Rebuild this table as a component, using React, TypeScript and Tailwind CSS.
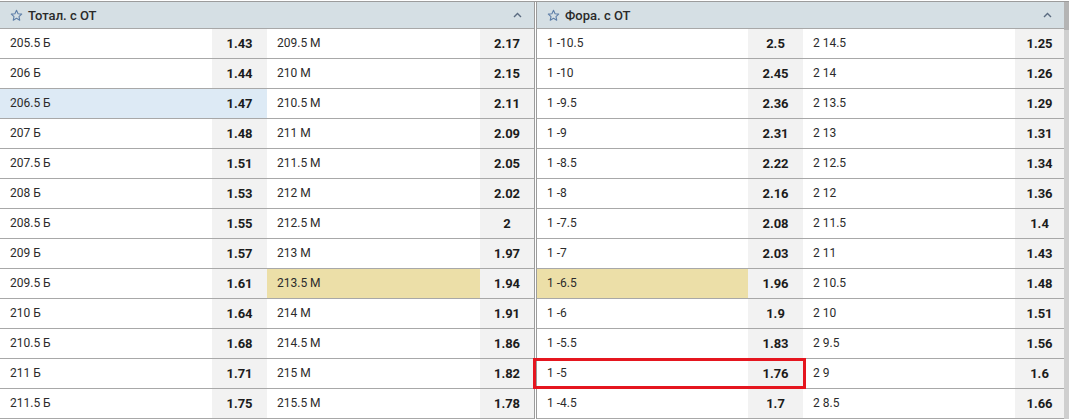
import React from "react";

type Row = { a: string; ao: string; b: string; bo: string };

const totals: Row[] = [
  { a: "205.5 Б", ao: "1.43", b: "209.5 М", bo: "2.17" },
  { a: "206 Б", ao: "1.44", b: "210 М", bo: "2.15" },
  { a: "206.5 Б", ao: "1.47", b: "210.5 М", bo: "2.11" },
  { a: "207 Б", ao: "1.48", b: "211 М", bo: "2.09" },
  { a: "207.5 Б", ao: "1.51", b: "211.5 М", bo: "2.05" },
  { a: "208 Б", ao: "1.53", b: "212 М", bo: "2.02" },
  { a: "208.5 Б", ao: "1.55", b: "212.5 М", bo: "2" },
  { a: "209 Б", ao: "1.57", b: "213 М", bo: "1.97" },
  { a: "209.5 Б", ao: "1.61", b: "213.5 М", bo: "1.94" },
  { a: "210 Б", ao: "1.64", b: "214 М", bo: "1.91" },
  { a: "210.5 Б", ao: "1.68", b: "214.5 М", bo: "1.86" },
  { a: "211 Б", ao: "1.71", b: "215 М", bo: "1.82" },
  { a: "211.5 Б", ao: "1.75", b: "215.5 М", bo: "1.78" },
];

const handicaps: Row[] = [
  { a: "1 -10.5", ao: "2.5", b: "2 14.5", bo: "1.25" },
  { a: "1 -10", ao: "2.45", b: "2 14", bo: "1.26" },
  { a: "1 -9.5", ao: "2.36", b: "2 13.5", bo: "1.29" },
  { a: "1 -9", ao: "2.31", b: "2 13", bo: "1.31" },
  { a: "1 -8.5", ao: "2.22", b: "2 12.5", bo: "1.34" },
  { a: "1 -8", ao: "2.16", b: "2 12", bo: "1.36" },
  { a: "1 -7.5", ao: "2.08", b: "2 11.5", bo: "1.4" },
  { a: "1 -7", ao: "2.03", b: "2 11", bo: "1.43" },
  { a: "1 -6.5", ao: "1.96", b: "2 10.5", bo: "1.48" },
  { a: "1 -6", ao: "1.9", b: "2 10", bo: "1.51" },
  { a: "1 -5.5", ao: "1.83", b: "2 9.5", bo: "1.56" },
  { a: "1 -5", ao: "1.76", b: "2 9", bo: "1.6" },
  { a: "1 -4.5", ao: "1.7", b: "2 8.5", bo: "1.66" },
];

const Star = () => (
  <svg width="13" height="13" viewBox="0 0 24 24" fill="none" stroke="#5f7fa8" strokeWidth="2" strokeLinejoin="round">
    <path d="M12 2.5l2.9 6.2 6.7.7-5 4.6 1.4 6.6L12 17.2l-6 3.4 1.4-6.6-5-4.6 6.7-.7z" />
  </svg>
);

const Chevron = () => (
  <svg width="9" height="6" viewBox="0 0 9 6" fill="none" stroke="#5a6b80" strokeWidth="1.4">
    <path d="M1 5l3.5-3.5L8 5" />
  </svg>
);

function Panel({
  title,
  rows,
  widths,
  blueRow,
  yellowRow,
  yellowCol,
  redRow,
}: {
  title: string;
  rows: Row[];
  widths: [string, string, string, string];
  blueRow?: number;
  yellowRow?: number;
  yellowCol?: "a" | "b";
  redRow?: number;
}) {
  return (
    <div className="flex flex-col">
      <div className="h-[27px] bg-[#d5dfe4] border-b border-[#a8a8a8] flex items-center pl-[10px] pr-[12px]">
        <Star />
        <span className="ml-[5px] text-[13px] font-medium text-[#2a2a2a] leading-none">{title}</span>
        <span className="ml-auto flex items-center">
          <Chevron />
        </span>
      </div>
      {rows.map((r, i) => {
        const blue = i === blueRow;
        const yA = i === yellowRow && yellowCol === "a";
        const yB = i === yellowRow && yellowCol === "b";
        return (
          <div key={i} className="relative flex h-[30px] border-b border-[#a8a8a8]">
            <div
              className={`${widths[0]} flex items-center pl-[10px] text-[12px] text-[#2b2b2b] ${
                blue ? "bg-[#ddeaf5]" : yA ? "bg-[#ecdfa8]" : "bg-white"
              }`}
            >
              <span className="-mt-[2px]">{r.a}</span>
            </div>
            <div
              className={`${widths[1]} flex items-center justify-center text-[13px] font-bold text-[#1c1c1c] ${
                blue ? "bg-[#ddeaf5]" : "bg-[#f2f2f2]"
              }`}
            >
              <span className="mt-[1px]">{r.ao}</span>
            </div>
            <div
              className={`${widths[2]} flex items-center pl-[10px] text-[12px] text-[#2b2b2b] ${
                yB ? "bg-[#ecdfa8]" : "bg-white"
              }`}
            >
              <span className="-mt-[2px]">{r.b}</span>
            </div>
            <div
              className={`${widths[3]} flex items-center justify-center text-[13px] font-bold text-[#1c1c1c] bg-[#f2f2f2]`}
            >
              <span className="mt-[1px]">{r.bo}</span>
            </div>
            {i === redRow && (
              <div className="absolute left-[-4px] top-[-1px] w-[273px] h-[31px] border-[3px] border-[#e5161f] pointer-events-none" />
            )}
          </div>
        );
      })}
    </div>
  );
}

export default function App() {
  return (
    <div
      className="w-[1069px] h-[420px] bg-white overflow-hidden pt-[1px]"
      style={{ fontFamily: "Roboto, 'Liberation Sans', Arial, sans-serif" }}
    >
      <div className="flex border-t border-[#9c9c9c]">
        <div className="w-[535px] border-r border-[#9c9c9c]">
          <Panel
            title="Тотал. с ОТ"
            rows={totals}
            widths={["w-[212px]", "w-[55px]", "w-[213px]", "w-[54px]"]}
            blueRow={2}
            yellowRow={8}
            yellowCol="b"
          />
        </div>
        <div className="w-[1px] bg-white" />
        <div className="w-[528px] border-l border-[#9c9c9c]">
          <Panel
            title="Фора. с ОТ"
            rows={handicaps}
            widths={["w-[211px]", "w-[55px]", "w-[212px]", "w-[49px]"]}
            yellowRow={8}
            yellowCol="a"
            redRow={11}
          />
        </div>
        <div className="w-[5px] flex flex-col">
          <div className="h-[28px] bg-[#b4b4b4]" />
          <div className="flex-1 bg-[#cfcfcf]" />
        </div>
      </div>
    </div>
  );
}
